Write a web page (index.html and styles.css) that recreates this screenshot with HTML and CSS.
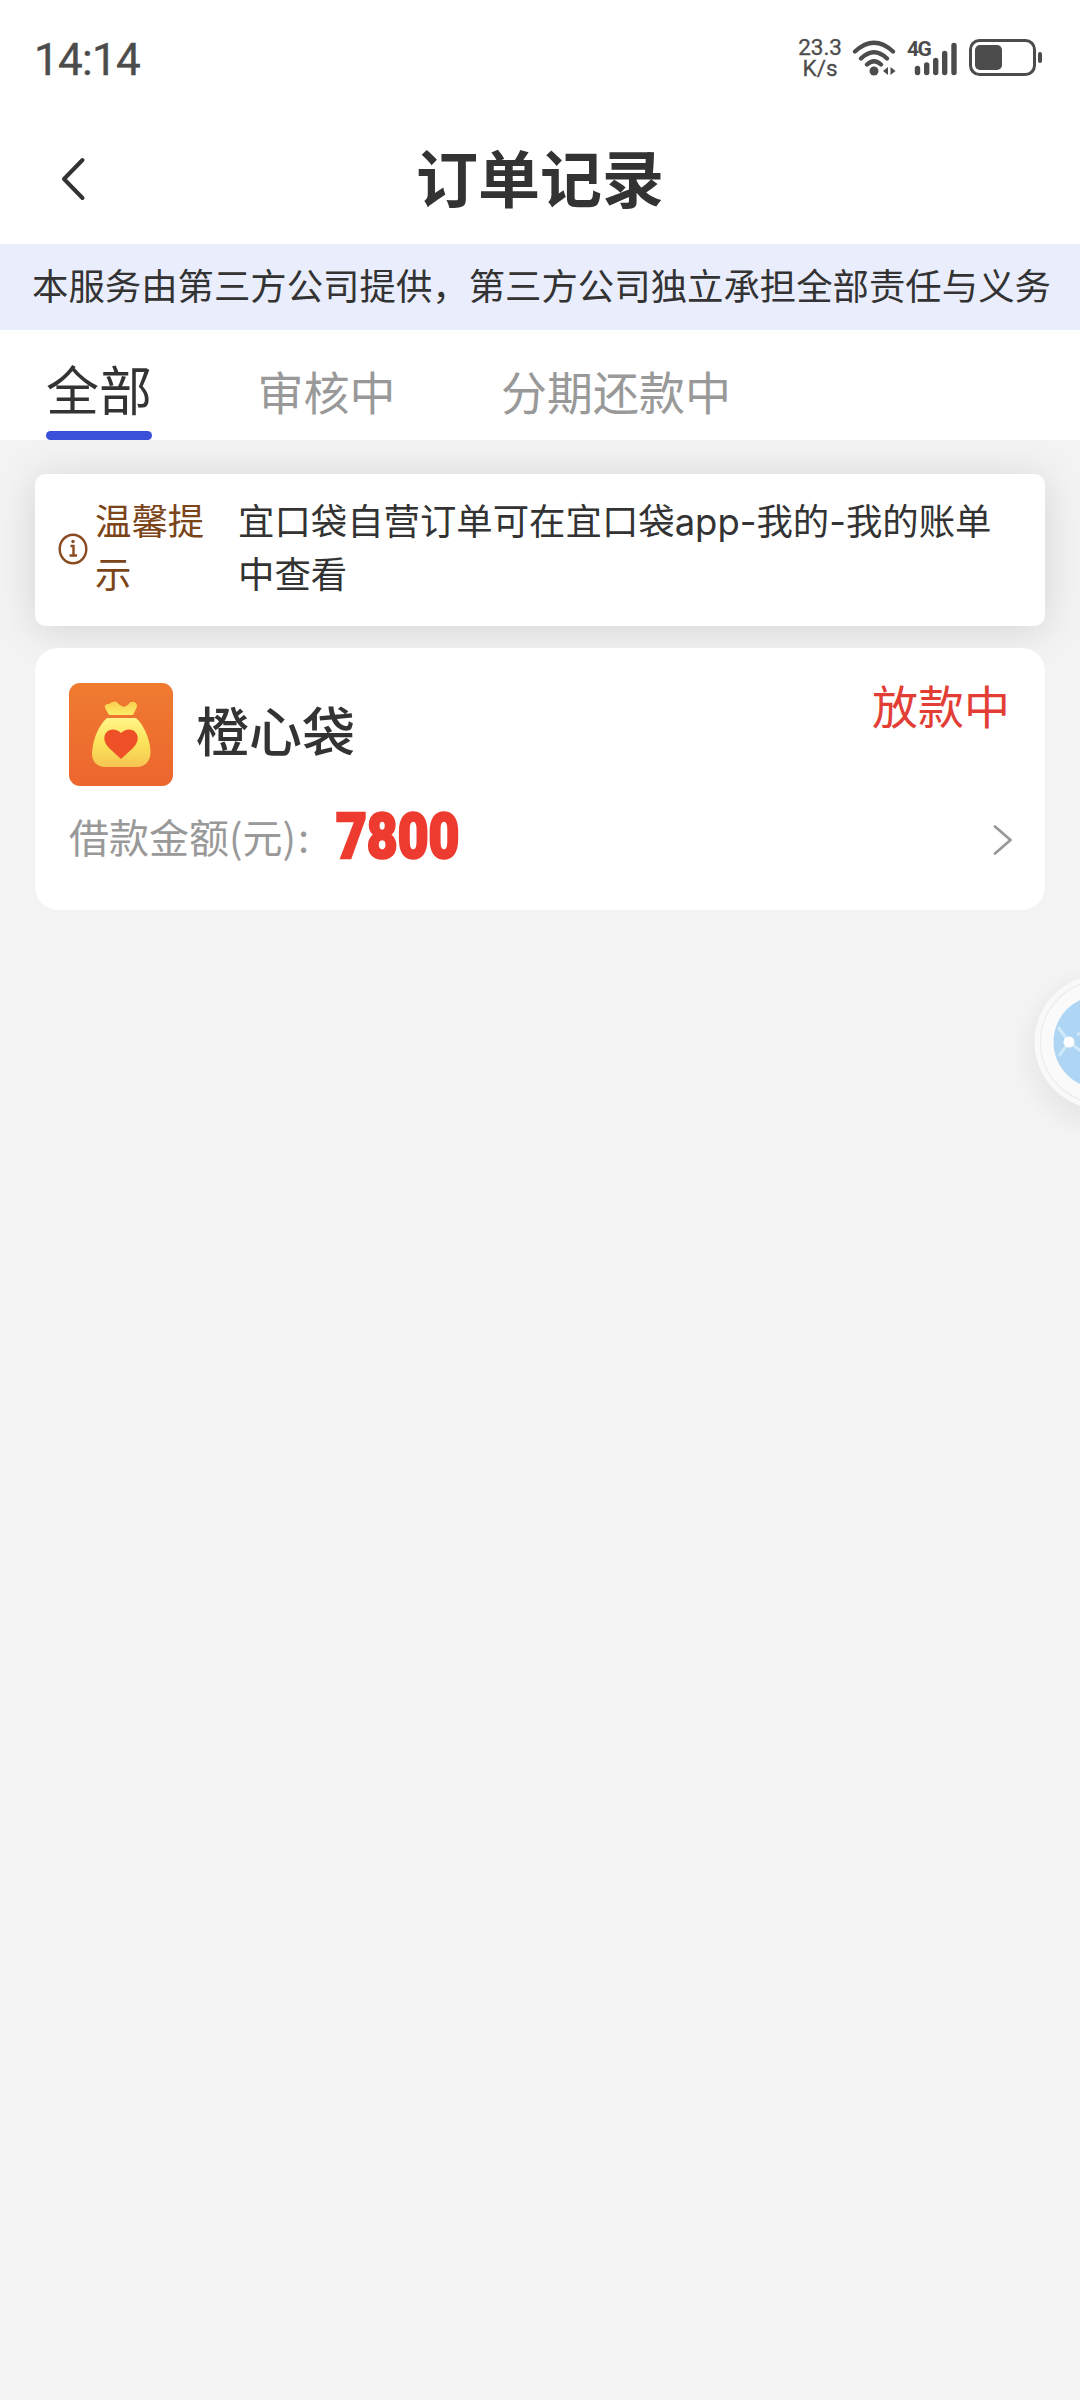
FILE: index.html
```html
<!DOCTYPE html>
<html lang="zh-CN">
<head>
<meta charset="utf-8">
<title>订单记录</title>
<link rel="stylesheet" href="styles.css">
</head>
<body>
<div class="page">
  <header class="top">
    <div class="status">
      <span class="time">14:14</span>
      <div class="indicators">
        <div class="speed"><span>23.3</span><span>K/s</span></div>
        <svg class="wifi" width="46" height="38" viewBox="0 0 46 38" fill="none" stroke="#4c4c4c" stroke-width="4.300" stroke-linecap="round">
          <path d="M3 12.500Q22 -5 41 12.500M9 19.500Q22 7 35 19.500M15 25.500Q22 19 29 25.500"/>
          <circle cx="22" cy="32" r="4.500" fill="#4c4c4c" stroke="none"/>
          <path d="M36 28v8l-5-4zM38.500 28v8l5-4z" fill="#4c4c4c" stroke="none"/>
        </svg>
        <div class="signal">
          <span class="net">4G</span>
          <svg width="52" height="36" viewBox="0 0 52 36" stroke="#4c4c4c" stroke-width="5.400" stroke-linecap="round">
            <path d="M10.500 28.500v4M19.700 25v7.500M28.700 20.500v12M37.700 13.500v19M47 5.500v27"/>
          </svg>
        </div>
        <svg class="battery" width="74" height="38" viewBox="0 0 74 38">
          <rect x="1.500" y="1.500" width="64" height="34" rx="9" fill="none" stroke="#4c4c4c" stroke-width="3"/>
          <rect x="6" y="6" width="27" height="25" rx="5" fill="#4c4c4c"/>
          <rect x="69" y="13" width="4" height="11" rx="2" fill="#4c4c4c"/>
        </svg>
      </div>
    </div>
    <div class="nav">
      <svg class="back" width="28" height="46" viewBox="0 0 28 46" fill="none" stroke="#333" stroke-width="4" stroke-linecap="round" stroke-linejoin="round"><path d="M23.500 4L5 23L23.500 42"/></svg>
      <h1 class="title">订单记录</h1>
    </div>
  </header>
  <div class="notice">本服务由第三方公司提供，第三方公司独立承担全部责任与义务</div>
  <nav class="tabs">
    <span class="tab tab-active">全部</span>
    <span class="tab">审核中</span>
    <span class="tab">分期还款中</span>
  </nav>
  <main class="list">
    <section class="tip">
      <svg class="info" width="30" height="34" viewBox="0 0 30 34" fill="none" stroke="#8a4b22">
        <ellipse cx="15" cy="17" rx="13.300" ry="14.300" stroke-width="2.400"/>
        <path d="M12.500 14h3v9M11.500 23.500h7.500" stroke-width="2.400"/>
        <circle cx="15" cy="9.500" r="1.700" fill="#8a4b22" stroke="none"/>
      </svg>
      <span class="tip-label">温馨提示</span>
      <p class="tip-text">宜口袋自营订单可在宜口袋app-我的-我的账单中查看</p>
    </section>
    <section class="order">
      <div class="order-head">
        <svg class="logo" width="104" height="103" viewBox="0 0 104 103">
          <defs>
            <linearGradient id="bg" x1="0" y1="0" x2="0" y2="1"><stop offset="0" stop-color="#ef7b30"/><stop offset="1" stop-color="#ec662e"/></linearGradient>
            <linearGradient id="bag" x1="0" y1="0" x2="0" y2="1"><stop offset="0" stop-color="#fff48a"/><stop offset=".5" stop-color="#fbe45a"/><stop offset="1" stop-color="#f6c453"/></linearGradient>
            <linearGradient id="knot" x1="0" y1="0" x2="0" y2="1"><stop offset="0" stop-color="#f7cf4e"/><stop offset="1" stop-color="#fdec68"/></linearGradient>
          </defs>
          <rect width="104" height="103" rx="11" fill="url(#bg)"/>
          <path d="M40 32L36 25Q35 21 40 21Q43 18 47 18.500Q51 23 55 24Q59 23 61 19.500Q64 18 67 20Q69 23 67 26L64 32Z" fill="url(#knot)"/>
          <path d="M38 35H67C74 41 81 55 81.500 68C82 79 75 84 68 84H36C29 84 22.500 79 23 70C24 54 31 41 38 35Z" fill="url(#bag)"/>
          <path d="M52 76L40 65C35 60 34 54 37 50C41 45 48 46 52 50C56 46 63 45 67 50C70 54 69 60 64 65Z" fill="#ee5127"/>
        </svg>
        <h2 class="name">橙心袋</h2>
        <span class="state">放款中</span>
      </div>
      <div class="order-row">
        <span class="amount-label">借款金额(元)</span><span class="colon">:</span>
        <span class="amount">7800</span>
        <svg class="more" width="22" height="32" viewBox="0 0 22 32" fill="none" stroke="#999" stroke-width="2.800" stroke-linecap="round" stroke-linejoin="round"><path d="M3 2.500L18.500 16L3 29.500"/></svg>
      </div>
    </section>
  </main>
  <svg class="float" width="86" height="190" viewBox="0 0 86 190">
    <defs>
      <radialGradient id="halo"><stop offset=".68" stop-color="#000" stop-opacity=".045"/><stop offset="1" stop-color="#000" stop-opacity="0"/></radialGradient>
    </defs>
    <circle cx="108" cy="100" r="88" fill="url(#halo)"/>
    <circle cx="108" cy="90" r="67.500" fill="#f9f9f9"/>
    <circle cx="108" cy="90" r="61.500" fill="#fafafa" stroke="#ececec" stroke-width="1.200"/>
    <circle cx="106" cy="90" r="46.500" fill="#aed5f3"/>
    <path d="M64 75L75 90L65 104M75 90L88 100M83 83L88 80" fill="none" stroke="#d0e9fa" stroke-width="3"/>
    <circle cx="75" cy="90" r="5.500" fill="#fff"/>
  </svg>
</div>
</body>
</html>
```
FILE: styles.css
```css
* { box-sizing: border-box; }
body {
  margin: 0;
  background: #f3f3f3;
  color: #333;
  font-family: "Noto Sans CJK SC", sans-serif;
}
h1, h2, p { margin: 0; }
.page {
  position: relative;
  width: 1080px;
  height: 2400px;
  overflow: hidden;
}
.top { height: 244px; background: #fff; }
.status {
  display: flex;
  justify-content: space-between;
  align-items: center;
  height: 114px;
  padding: 2px 37px 0 34px;
  color: #4c4c4c;
  font-family: Roboto, sans-serif;
}
.time {
  padding-top: 3px;
  font-size: 44px;
  line-height: 60px;
  letter-spacing: -.7px;
  -webkit-text-stroke: .4px #4c4c4c;
}
.indicators { display: flex; align-items: center; }
.speed {
  display: flex;
  flex-direction: column;
  align-items: center;
  margin-right: 10px;
  font-size: 22.500px;
  line-height: 21px;
  -webkit-text-stroke: .3px #4c4c4c;
}
.wifi { margin-right: 9px; }
.signal { position: relative; display: flex; margin-right: 10px; }
.net {
  position: absolute;
  left: 0;
  top: -1px;
  font-size: 21px;
  font-weight: 700;
  line-height: 21px;
  letter-spacing: -1.500px;
}
.nav {
  display: grid;
  grid-template-columns: 80px 1fr 80px;
  align-items: center;
  height: 130px;
  padding: 0 59px;
}
.title {
  margin-top: -6px;
  font-size: 62px;
  line-height: 90px;
  font-weight: 700;
  text-align: center;
}
.notice {
  height: 86px;
  padding-left: 32px;
  background: #eaedfb;
  font-size: 36.400px;
  line-height: 80px;
  white-space: nowrap;
}
.tabs {
  display: flex;
  gap: 105.500px;
  height: 110px;
  padding-left: 46px;
  background: #fff;
}
.tab { height: 110px; color: #999; font-size: 46px; line-height: 121px; }
.tab-active {
  display: flex;
  flex-direction: column;
  justify-content: space-between;
  color: #333;
  font-size: 53px;
  line-height: 116px;
}
.tab-active::after {
  content: "";
  flex: none;
  height: 9px;
  margin-top: -15px;
  border-radius: 5px;
  background: #3b50d8;
}
.list {
  display: flex;
  flex-direction: column;
  gap: 22px;
  padding: 34px 35px;
}
.tip {
  display: flex;
  align-items: center;
  height: 152px;
  padding: 0 40px 0 23px;
  border-radius: 11px;
  background: #fff;
  box-shadow: 0 4px 40px rgba(0, 0, 0, .13);
  font-size: 36.400px;
  line-height: 53px;
}
.info { flex: none; margin: -2px 7px 0 0; }
.tip-label { flex: none; width: 110px; margin: -9px 33px 0 0; color: #7b4419; }
.tip-text { flex: 1; margin-top: -3px; font-family: Inter, "Noto Sans CJK SC", sans-serif; }
.order {
  position: relative;
  height: 262px;
  padding: 35px 34px;
  border-radius: 23px;
  background: #fff;
}
.order-head { display: flex; height: 103px; }
.name { margin-left: 23px; font-size: 53px; font-weight: 500; line-height: 92px; }
.state { margin: -2px 1px 0 auto; color: #e33e36; font-size: 46px; line-height: 46px; }
.order-row { display: flex; align-items: center; height: 104px; }
.amount-label { margin-top: -5px; color: #999; font-size: 40px; line-height: 60px; }
.colon { margin: -6px 0 0 2px; color: #999; font-size: 40px; line-height: 60px; }
.amount {
  margin: -2px 0 0 27px;
  color: #ee3b30;
  font: 900 63px/64px Roboto, sans-serif;
  -webkit-text-stroke: 2.500px #ee3b30;
  transform: scaleX(.845);
  transform-origin: left center;
}
.more { margin: 3px -3px 0 auto; }
.float { position: absolute; right: 0; top: 952px; }
```
